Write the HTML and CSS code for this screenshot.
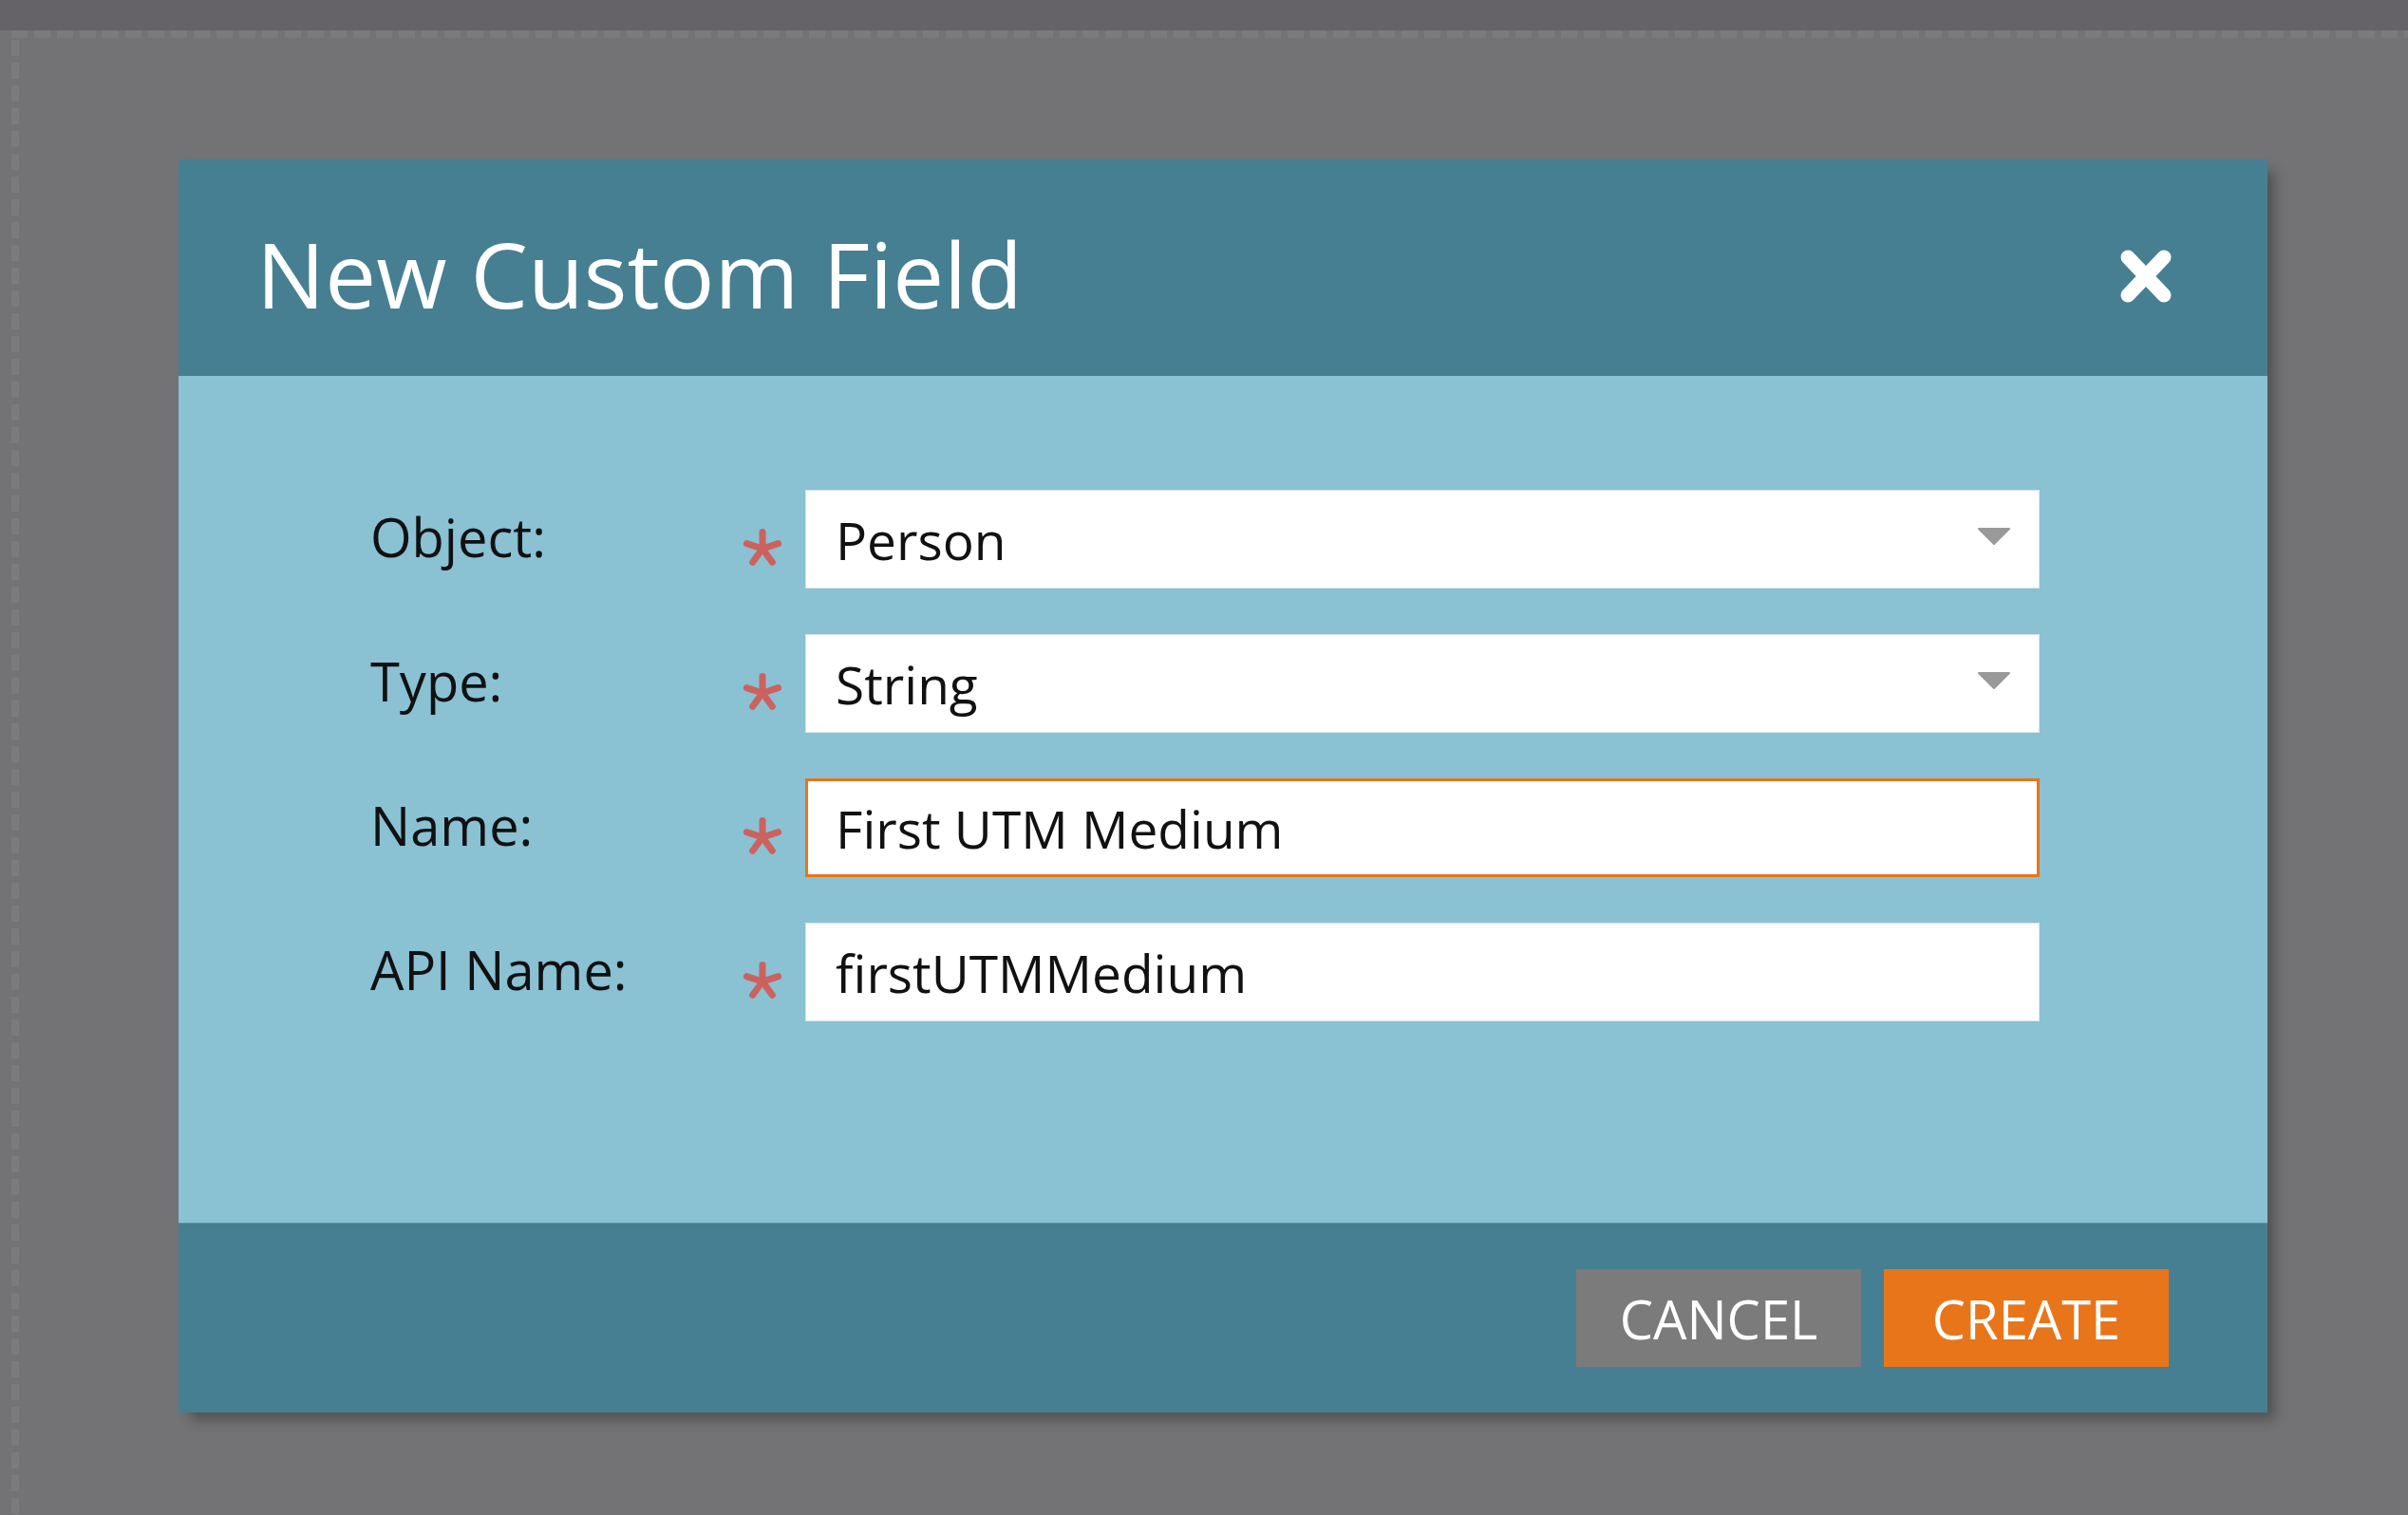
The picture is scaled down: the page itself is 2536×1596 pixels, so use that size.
FILE: index.html
```html
<!DOCTYPE html>
<html lang="en">
<head>
<meta charset="utf-8">
<title>New Custom Field</title>
<link rel="stylesheet" href="styles.css">
</head>
<body>
<div class="topbar"></div>
<div class="stage">
  <div class="modal">
    <div class="modal-header">
      <h1 class="modal-title">New Custom Field</h1>
      <button class="close-btn" aria-label="Close">
        <svg viewBox="0 0 56 58" width="56" height="58">
          <path d="M9 9 L47 49 M47 9 L9 49" stroke="#fff" stroke-width="15" stroke-linecap="round" fill="none"/>
        </svg>
      </button>
    </div>
    <div class="modal-body">
      <div class="form-grid">
        <label class="field-label">Object:</label>
        <svg class="req" viewBox="0 0 46 42" width="46" height="42"><g stroke="#cc625e" stroke-width="7" stroke-linecap="round"><line x1="23" y1="22" x2="23" y2="4.5"/><line x1="23" y1="22" x2="39.6" y2="16.6"/><line x1="23" y1="22" x2="33.3" y2="36.2"/><line x1="23" y1="22" x2="12.7" y2="36.2"/><line x1="23" y1="22" x2="6.4" y2="16.6"/></g></svg>
        <div class="input select">Person<svg class="caret" viewBox="0 0 34 18" width="34" height="18"><polygon points="1,1 33,1 17,17" fill="#999" stroke="#999" stroke-width="2" stroke-linejoin="round"/></svg></div>

        <label class="field-label">Type:</label>
        <svg class="req" viewBox="0 0 46 42" width="46" height="42"><g stroke="#cc625e" stroke-width="7" stroke-linecap="round"><line x1="23" y1="22" x2="23" y2="4.5"/><line x1="23" y1="22" x2="39.6" y2="16.6"/><line x1="23" y1="22" x2="33.3" y2="36.2"/><line x1="23" y1="22" x2="12.7" y2="36.2"/><line x1="23" y1="22" x2="6.4" y2="16.6"/></g></svg>
        <div class="input select">String<svg class="caret" viewBox="0 0 34 18" width="34" height="18"><polygon points="1,1 33,1 17,17" fill="#999" stroke="#999" stroke-width="2" stroke-linejoin="round"/></svg></div>

        <label class="field-label">Name:</label>
        <svg class="req" viewBox="0 0 46 42" width="46" height="42"><g stroke="#cc625e" stroke-width="7" stroke-linecap="round"><line x1="23" y1="22" x2="23" y2="4.5"/><line x1="23" y1="22" x2="39.6" y2="16.6"/><line x1="23" y1="22" x2="33.3" y2="36.2"/><line x1="23" y1="22" x2="12.7" y2="36.2"/><line x1="23" y1="22" x2="6.4" y2="16.6"/></g></svg>
        <div class="input focused">First UTM Medium</div>

        <label class="field-label">API Name:</label>
        <svg class="req" viewBox="0 0 46 42" width="46" height="42"><g stroke="#cc625e" stroke-width="7" stroke-linecap="round"><line x1="23" y1="22" x2="23" y2="4.5"/><line x1="23" y1="22" x2="39.6" y2="16.6"/><line x1="23" y1="22" x2="33.3" y2="36.2"/><line x1="23" y1="22" x2="12.7" y2="36.2"/><line x1="23" y1="22" x2="6.4" y2="16.6"/></g></svg>
        <div class="input">firstUTMMedium</div>
      </div>
    </div>
    <div class="modal-footer">
      <button class="btn btn-cancel">CANCEL</button>
      <button class="btn btn-create">CREATE</button>
    </div>
  </div>
</div>
</body>
</html>
```
FILE: styles.css
```css
html, body {
  margin: 0;
  padding: 0;
}
body {
  width: 2536px;
  height: 1596px;
  overflow: hidden;
  background: #737274;
  font-family: "Open Sans", "Noto Sans", sans-serif;
}
.topbar {
  height: 32px;
  background: #656368;
}
.stage {
  height: 1564px;
  box-sizing: border-box;
  padding-top: 136px;
  padding-left: 188px;
  background-color: #737274;
  background-image:
    repeating-linear-gradient(to right, #7b7a7c 0 17px, transparent 17px 24px),
    repeating-linear-gradient(to bottom, #7b7a7c 0 17px, transparent 17px 24px);
  background-size: 100% 8px, 8px 100%;
  background-position: 12px 0, 12px 10px;
  background-repeat: no-repeat;
}
.modal {
  width: 2200px;
  box-shadow: 10px 10px 12px -2px rgba(0, 0, 0, 0.28);
}
.modal-header {
  height: 228px;
  box-sizing: border-box;
  background: #467f91;
  display: flex;
  align-items: center;
  justify-content: space-between;
  padding: 12px 100px 0 82px;
}
.modal-title {
  margin: 0;
  font-size: 96px;
  line-height: 1;
  font-weight: 400;
  color: #fff;
}
.close-btn {
  background: none;
  border: 0;
  padding: 0;
  margin-top: 6px;
  width: 56px;
  height: 58px;
  display: flex;
}
.modal-body {
  height: 892px;
  box-sizing: border-box;
  background: #8ac1d3;
  padding: 120px 240px 0 202px;
}
.form-grid {
  display: grid;
  grid-template-columns: 390px 68px 1300px;
  grid-auto-rows: 104px;
  row-gap: 48px;
}
.field-label {
  align-self: center;
  font-size: 56px;
  line-height: 1;
  color: #111;
  margin-bottom: 6px;
}
.req {
  align-self: start;
  margin-top: 40px;
}
.input {
  position: relative;
  box-sizing: border-box;
  height: 104px;
  background: #fff;
  border: 1px solid #d3e7ee;
  padding-left: 31px;
  display: flex;
  align-items: center;
  font-size: 55px;
  line-height: 1;
  color: #111;
}
.input.focused {
  border: 3px solid #e8751a;
  padding-left: 29px;
}
.caret {
  position: absolute;
  right: 30px;
  top: 39px;
}
.modal-footer {
  height: 200px;
  box-sizing: border-box;
  background: #467f91;
  border-top: 1px solid #5d95a6;
  display: flex;
  justify-content: flex-end;
  align-items: center;
  gap: 24px;
  padding-right: 104px;
}
.btn {
  width: 300px;
  height: 103px;
  border: 0;
  padding: 0;
  color: #fff;
  font-family: "Open Sans", "Noto Sans", sans-serif;
  font-size: 56px;
  line-height: 1;
}
.btn-cancel {
  background: #7b7b7b;
}
.btn-create {
  background: #e8751a;
}
```
